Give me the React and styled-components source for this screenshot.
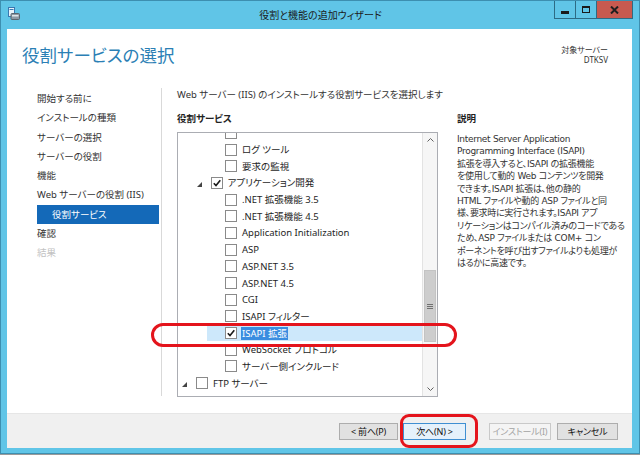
import React from 'react';
import styled, { createGlobalStyle } from 'styled-components';

const GlobalStyle = createGlobalStyle`
  html, body {
    margin: 0;
    padding: 0;
    background: #9a9a9a;
  }
  body {
    width: 640px;
    height: 455px;
    overflow: hidden;
    font-family: "Noto Sans", "Noto Sans CJK JP", sans-serif;
    font-size: 9.5px;
    font-feature-settings: "palt";
    color: #1e1e1e;
  }
`;

const Window = styled.div`
  position: relative;
  width: 640px;
  height: 454px;
  box-sizing: border-box;
  border: 1px solid #3d8fb0;
  background: #60c5e7;
  display: flex;
  flex-direction: column;
`;

const TitleBar = styled.div`
  height: 28px;
  flex-shrink: 0;
  display: grid;
  grid-template-columns: 1fr auto 1fr;
  align-items: center;
  padding: 0 6px 0 7px;
`;

const TitleIcon = styled.div`
  justify-self: start;
  display: flex;
  margin-top: -3px;
`;

const TitleText = styled.div`
  font-size: 10px;
  color: #1a1a1a;
  margin-top: -2px;
`;

const Controls = styled.div`
  justify-self: end;
  align-self: start;
  display: flex;
  height: 18px;
`;

const CtrlButton = styled.div`
  width: ${p => p.w}px;
  height: 18px;
  box-sizing: border-box;
  border: 1px solid #2d6b84;
  border-top: none;
  margin-left: -1px;
  background: ${p => p.bg || '#60c5e7'};
  display: flex;
  align-items: center;
  justify-content: center;
`;

const MinGlyph = styled.div`
  width: 8px;
  height: 3px;
  background: #1a1a1a;
  margin-top: 5px;
`;

const MaxGlyph = styled.div`
  width: 8px;
  height: 7px;
  box-sizing: border-box;
  border: 1.5px solid #1a1a1a;
  border-top-width: 2.5px;
`;

const Client = styled.div`
  flex: 1;
  margin: 0 7px 5px 6px;
  background: #fff;
  display: flex;
  flex-direction: column;
  min-height: 0;
`;

const Header = styled.div`
  height: 57px;
  flex-shrink: 0;
  box-sizing: border-box;
  display: flex;
  justify-content: space-between;
  align-items: flex-start;
  padding: 15px 24px 0 15px;
`;

const PageTitle = styled.h1`
  margin: 0;
  font-size: 17.5px;
  line-height: 22px;
  font-weight: 400;
  color: #2b7fb5;
`;

const Target = styled.div`
  text-align: right;
  font-size: 8px;
  line-height: 10px;
  color: #333;
  padding-top: 1px;
`;

const Main = styled.div`
  flex: 1;
  display: flex;
  min-height: 0;
`;

const Nav = styled.nav`
  width: 154px;
  flex-shrink: 0;
  box-sizing: border-box;
  padding: 3px 2px 0 30px;
  display: flex;
  flex-direction: column;
`;

const NavItem = styled.div`
  height: 19.3px;
  line-height: 19.3px;
  font-size: 9.5px;
  padding-left: ${p => (p.sub ? 15 : 0)}px;
  background: ${p => (p.active ? '#1469b8' : 'transparent')};
  color: ${p => (p.active ? '#fff' : p.disabled ? '#c2c2c2' : '#333')};
  white-space: nowrap;
`;

const Divider = styled.div`
  width: 1px;
  flex-shrink: 0;
  background: #d9d9d9;
  margin: 2px 0 17px;
`;

const Panel = styled.div`
  flex: 1;
  padding: 3px 0 0 15px;
  display: flex;
  flex-direction: column;
`;

const Subtitle = styled.div`
  line-height: 12px;
  color: #333;
`;

const Columns = styled.div`
  display: flex;
  gap: 19px;
  margin-top: 12px;
`;

const ListColumn = styled.div`
  width: 261px;
  flex-shrink: 0;
`;

const SectionLabel = styled.div`
  font-weight: 700;
  line-height: 12px;
  color: #222;
`;

const ListBox = styled.div`
  margin-top: 7px;
  height: 265px;
  box-sizing: border-box;
  border: 1px solid #abadb3;
  display: flex;
  overflow: hidden;
`;

const Rows = styled.div`
  flex: 1;
  overflow: hidden;
`;

const RowsInner = styled.div`
  margin-top: -8.5px;
`;

const Row = styled.div`
  height: 16.7px;
  display: flex;
  padding-left: ${p => p.level * 14.5}px;
`;

const Item = styled.div`
  flex: 1;
  display: flex;
  align-items: center;
  padding-left: 4px;
  background: ${p => (p.selected ? '#cde8fb' : 'transparent')};
`;

const Expander = styled.span`
  width: 14px;
  flex-shrink: 0;
  display: flex;
  align-items: center;
  margin-top: 3px;
`;

const Box = styled.span`
  width: 12px;
  height: 12px;
  flex-shrink: 0;
  box-sizing: border-box;
  border: 1px solid #8a8a8a;
  background: #fff;
  display: flex;
  align-items: center;
  justify-content: center;
`;

const Label = styled.span`
  margin-left: 4px;
  padding: 0 1px;
  line-height: 13px;
  white-space: nowrap;
  color: ${p => (p.selected ? '#fff' : '#1e1e1e')};
  background: ${p => (p.selected ? '#3a8de0' : 'transparent')};
`;

const Scrollbar = styled.div`
  width: 14px;
  flex-shrink: 0;
  border-left: 1px solid #e3e3e3;
  background: #f6f6f6;
  display: flex;
  flex-direction: column;
`;

const ScrollArrow = styled.div`
  height: 14px;
  flex-shrink: 0;
  display: flex;
  align-items: center;
  justify-content: center;
`;

const Track = styled.div`
  flex: 1;
`;

const Thumb = styled.div`
  margin: 123px 1px 0;
  height: 72px;
  box-sizing: border-box;
  background: #cdcdcd;
  border: 1px solid #c3c3c3;
  display: flex;
  align-items: center;
  justify-content: center;
`;

const DescColumn = styled.div`
  width: 170px;
  flex-shrink: 0;
`;

const DescText = styled.div`
  margin-top: 8px;
  color: #333;
  font-family: "DejaVu Sans", "Noto Sans CJK JP", sans-serif;
  font-size: 9px;
  letter-spacing: -0.3px;
`;

const DescLine = styled.div`
  line-height: 12.4px;
  white-space: nowrap;
`;

const Footer = styled.div`
  height: 35px;
  flex-shrink: 0;
  box-sizing: border-box;
  background: #f0f0f0;
  border-top: 1px solid #e6e6e6;
  display: flex;
  align-items: center;
  justify-content: flex-end;
  padding-right: 14px;
`;

const Button = styled.button`
  width: ${p => p.w}px;
  height: 17px;
  margin-left: ${p => p.gap || 0}px;
  padding: 0;
  box-sizing: border-box;
  font-family: inherit;
  font-size: 9px;
  letter-spacing: -0.2px;
  font-feature-settings: "palt";
  white-space: nowrap;
  overflow: hidden;
  border: 1px solid ${p => (p.primary ? '#3f8fd2' : p.disabled ? '#c9c9c9' : '#adadad')};
  background: ${p => (p.primary ? '#e5f1fb' : p.disabled ? '#f4f4f4' : '#e1e1e1')};
  color: ${p => (p.disabled ? '#a3a3a3' : '#111')};
`;

const Annotation = styled.div`
  position: absolute;
  left: ${p => p.x}px;
  top: ${p => p.y}px;
  width: ${p => p.w}px;
  height: ${p => p.h}px;
  box-sizing: border-box;
  border: 3px solid #e4141c;
  border-radius: ${p => p.r}px;
  pointer-events: none;
`;

const navItems = [
  { label: '開始する前に' },
  { label: 'インストールの種類' },
  { label: 'サーバーの選択' },
  { label: 'サーバーの役割' },
  { label: '機能' },
  { label: 'Web サーバーの役割 (IIS)' },
  { label: '役割サービス', active: true, sub: true },
  { label: '確認' },
  { label: '結果', disabled: true },
];

// first row is scrolled almost out of view: only the bottom of its box shows
const rows = [
  { level: 2, label: '' },
  { level: 2, label: 'ログ ツール' },
  { level: 2, label: '要求の監視' },
  { level: 1, label: 'アプリケーション開発', expanded: true, checked: true },
  { level: 2, label: '.NET 拡張機能 3.5' },
  { level: 2, label: '.NET 拡張機能 4.5' },
  { level: 2, label: 'Application Initialization' },
  { level: 2, label: 'ASP' },
  { level: 2, label: 'ASP.NET 3.5' },
  { level: 2, label: 'ASP.NET 4.5' },
  { level: 2, label: 'CGI' },
  { level: 2, label: 'ISAPI フィルター' },
  { level: 2, label: 'ISAPI 拡張', checked: true, selected: true },
  { level: 2, label: 'WebSocket プロトコル' },
  { level: 2, label: 'サーバー側インクルード' },
  { level: 0, label: 'FTP サーバー', expanded: true },
];

const descLines = [
  'Internet Server Application',
  'Programming Interface (ISAPI)',
  '拡張を導入すると、ISAPI の拡張機能',
  'を使用して動的 Web コンテンツを開発',
  'できます。ISAPI 拡張は、他の静的',
  'HTML ファイルや動的 ASP ファイルと同',
  '様、要求時に実行されます。ISAPI アプ',
  'リケーションはコンパイル済みのコードである',
  'ため、ASP ファイルまたは COM+ コン',
  'ポーネントを呼び出すファイルよりも処理が',
  'はるかに高速です。',
];

function AppIcon() {
  return (
    <svg width="12" height="13" viewBox="0 0 12 13">
      <rect x="0.5" y="0.5" width="6" height="9" fill="#e8f4fb" stroke="#3a78b0" />
      <rect x="1.5" y="2" width="4" height="1" fill="#3a78b0" />
      <rect x="3" y="6.5" width="8.5" height="6" rx="1" fill="#8d9aa5" stroke="#5b6670" />
      <rect x="4" y="8" width="6.5" height="1.5" fill="#e0e6ea" />
    </svg>
  );
}

function Checkbox({ checked }) {
  return (
    <Box>
      {checked && (
        <svg width="10" height="10" viewBox="0 0 10 10">
          <path d="M1.8 5.2 L4 7.6 L8.3 2.2" fill="none" stroke="#1a1a1a" strokeWidth="1.6" />
        </svg>
      )}
    </Box>
  );
}

function TreeRow({ level, label, expanded, checked, selected }) {
  return (
    <Row level={level}>
      <Item selected={selected}>
        <Expander>
          {expanded && (
            <svg width="5" height="5" viewBox="0 0 5 5">
              <polygon points="5,0 5,5 0,5" fill="#444" />
            </svg>
          )}
        </Expander>
        <Checkbox checked={checked} />
        {label && <Label selected={selected}>{label}</Label>}
      </Item>
    </Row>
  );
}

export default function App() {
  return (
    <>
      <GlobalStyle />
      <Window>
        <TitleBar>
          <TitleIcon>
            <AppIcon />
          </TitleIcon>
          <TitleText>役割と機能の追加ウィザード</TitleText>
          <Controls>
            <CtrlButton w={22}>
              <MinGlyph />
            </CtrlButton>
            <CtrlButton w={22}>
              <MaxGlyph />
            </CtrlButton>
            <CtrlButton w={37} bg="#c75a50">
              <svg width="9" height="8" viewBox="0 0 9 8">
                <path d="M1 0.5 L8 7.5 M8 0.5 L1 7.5" stroke="#1f1f1f" strokeWidth="2" />
              </svg>
            </CtrlButton>
          </Controls>
        </TitleBar>

        <Client>
          <Header>
            <PageTitle>役割サービスの選択</PageTitle>
            <Target>
              <div>対象サーバー</div>
              <div>DTKSV</div>
            </Target>
          </Header>

          <Main>
            <Nav>
              {navItems.map(item => (
                <NavItem key={item.label} active={item.active} sub={item.sub} disabled={item.disabled}>
                  {item.label}
                </NavItem>
              ))}
            </Nav>
            <Divider />
            <Panel>
              <Subtitle>Web サーバー (IIS) のインストールする役割サービスを選択します</Subtitle>
              <Columns>
                <ListColumn>
                  <SectionLabel>役割サービス</SectionLabel>
                  <ListBox>
                    <Rows>
                      <RowsInner>
                        {rows.map((r, i) => (
                          <TreeRow key={i} {...r} />
                        ))}
                      </RowsInner>
                    </Rows>
                    <Scrollbar>
                      <ScrollArrow>
                        <svg width="7" height="4" viewBox="0 0 7 4">
                          <polyline points="0.5,3.5 3.5,0.5 6.5,3.5" fill="none" stroke="#606060" />
                        </svg>
                      </ScrollArrow>
                      <Track>
                        <Thumb>
                          <svg width="6" height="5" viewBox="0 0 6 5">
                            <path d="M0 0.5 H6 M0 2.5 H6 M0 4.5 H6" stroke="#707070" />
                          </svg>
                        </Thumb>
                      </Track>
                      <ScrollArrow>
                        <svg width="7" height="4" viewBox="0 0 7 4">
                          <polyline points="0.5,0.5 3.5,3.5 6.5,0.5" fill="none" stroke="#606060" />
                        </svg>
                      </ScrollArrow>
                    </Scrollbar>
                  </ListBox>
                </ListColumn>
                <DescColumn>
                  <SectionLabel>説明</SectionLabel>
                  <DescText>
                    {descLines.map(line => (
                      <DescLine key={line}>{line}</DescLine>
                    ))}
                  </DescText>
                </DescColumn>
              </Columns>
            </Panel>
          </Main>

          <Footer>
            <Button w={59}>&lt; 前へ(P)</Button>
            <Button w={63} gap={5} primary>
              次へ(N) &gt;
            </Button>
            <Button w={62} gap={23} disabled>
              インストール(I)
            </Button>
            <Button w={61} gap={6}>
              キャンセル
            </Button>
          </Footer>
        </Client>

        <Annotation x={150} y={322} w={306} h={24} r={12} />
        <Annotation x={399} y={413} w={78} h={34} r={9} />
      </Window>
    </>
  );
}
